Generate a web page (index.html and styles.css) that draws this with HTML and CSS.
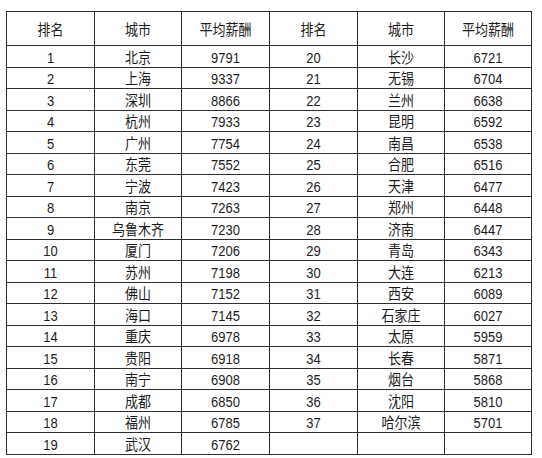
FILE: index.html
```html
<!DOCTYPE html>
<html lang="zh">
<head>
<meta charset="utf-8">
<link rel="stylesheet" href="styles.css">
</head>
<body>
<div class="table">
  <div class="cell head"><span>排名</span></div><div class="cell head"><span>城市</span></div><div class="cell head"><span>平均薪酬</span></div><div class="cell head"><span>排名</span></div><div class="cell head"><span>城市</span></div><div class="cell head"><span>平均薪酬</span></div>
  <div class="cell"><span>1</span></div><div class="cell"><span>北京</span></div><div class="cell"><span>9791</span></div><div class="cell"><span>20</span></div><div class="cell"><span>长沙</span></div><div class="cell"><span>6721</span></div>
  <div class="cell"><span>2</span></div><div class="cell"><span>上海</span></div><div class="cell"><span>9337</span></div><div class="cell"><span>21</span></div><div class="cell"><span>无锡</span></div><div class="cell"><span>6704</span></div>
  <div class="cell"><span>3</span></div><div class="cell"><span>深圳</span></div><div class="cell"><span>8866</span></div><div class="cell"><span>22</span></div><div class="cell"><span>兰州</span></div><div class="cell"><span>6638</span></div>
  <div class="cell"><span>4</span></div><div class="cell"><span>杭州</span></div><div class="cell"><span>7933</span></div><div class="cell"><span>23</span></div><div class="cell"><span>昆明</span></div><div class="cell"><span>6592</span></div>
  <div class="cell"><span>5</span></div><div class="cell"><span>广州</span></div><div class="cell"><span>7754</span></div><div class="cell"><span>24</span></div><div class="cell"><span>南昌</span></div><div class="cell"><span>6538</span></div>
  <div class="cell"><span>6</span></div><div class="cell"><span>东莞</span></div><div class="cell"><span>7552</span></div><div class="cell"><span>25</span></div><div class="cell"><span>合肥</span></div><div class="cell"><span>6516</span></div>
  <div class="cell"><span>7</span></div><div class="cell"><span>宁波</span></div><div class="cell"><span>7423</span></div><div class="cell"><span>26</span></div><div class="cell"><span>天津</span></div><div class="cell"><span>6477</span></div>
  <div class="cell"><span>8</span></div><div class="cell"><span>南京</span></div><div class="cell"><span>7263</span></div><div class="cell"><span>27</span></div><div class="cell"><span>郑州</span></div><div class="cell"><span>6448</span></div>
  <div class="cell"><span>9</span></div><div class="cell"><span>乌鲁木齐</span></div><div class="cell"><span>7230</span></div><div class="cell"><span>28</span></div><div class="cell"><span>济南</span></div><div class="cell"><span>6447</span></div>
  <div class="cell"><span>10</span></div><div class="cell"><span>厦门</span></div><div class="cell"><span>7206</span></div><div class="cell"><span>29</span></div><div class="cell"><span>青岛</span></div><div class="cell"><span>6343</span></div>
  <div class="cell"><span>11</span></div><div class="cell"><span>苏州</span></div><div class="cell"><span>7198</span></div><div class="cell"><span>30</span></div><div class="cell"><span>大连</span></div><div class="cell"><span>6213</span></div>
  <div class="cell"><span>12</span></div><div class="cell"><span>佛山</span></div><div class="cell"><span>7152</span></div><div class="cell"><span>31</span></div><div class="cell"><span>西安</span></div><div class="cell"><span>6089</span></div>
  <div class="cell"><span>13</span></div><div class="cell"><span>海口</span></div><div class="cell"><span>7145</span></div><div class="cell"><span>32</span></div><div class="cell"><span>石家庄</span></div><div class="cell"><span>6027</span></div>
  <div class="cell"><span>14</span></div><div class="cell"><span>重庆</span></div><div class="cell"><span>6978</span></div><div class="cell"><span>33</span></div><div class="cell"><span>太原</span></div><div class="cell"><span>5959</span></div>
  <div class="cell"><span>15</span></div><div class="cell"><span>贵阳</span></div><div class="cell"><span>6918</span></div><div class="cell"><span>34</span></div><div class="cell"><span>长春</span></div><div class="cell"><span>5871</span></div>
  <div class="cell"><span>16</span></div><div class="cell"><span>南宁</span></div><div class="cell"><span>6908</span></div><div class="cell"><span>35</span></div><div class="cell"><span>烟台</span></div><div class="cell"><span>5868</span></div>
  <div class="cell"><span>17</span></div><div class="cell"><span>成都</span></div><div class="cell"><span>6850</span></div><div class="cell"><span>36</span></div><div class="cell"><span>沈阳</span></div><div class="cell"><span>5810</span></div>
  <div class="cell"><span>18</span></div><div class="cell"><span>福州</span></div><div class="cell"><span>6785</span></div><div class="cell"><span>37</span></div><div class="cell"><span>哈尔滨</span></div><div class="cell"><span>5701</span></div>
  <div class="cell"><span>19</span></div><div class="cell"><span>武汉</span></div><div class="cell"><span>6762</span></div><div class="cell"></div><div class="cell"></div><div class="cell"></div>
</div>
</body>
</html>
```

FILE: styles.css
```css
html, body {
  margin: 0;
  padding: 0;
  background: #ffffff;
}

body {
  padding: 11px 0 0 6px;
  font-family: "Liberation Sans", "Noto Sans CJK SC", sans-serif;
  font-size: 13px;
  color: #1c1c1c;
}

.table {
  display: grid;
  grid-template-columns: 88px 87px 88px 88px 87px 87px;
  grid-template-rows: 34px repeat(19, 21.5px);
  width: 526px;
  box-sizing: border-box;
  border-left: 1px solid #2e2e2e;
  border-top: 1px solid #2e2e2e;
}

.cell {
  box-sizing: border-box;
  border-right: 1px solid #2e2e2e;
  border-bottom: 1px solid #2e2e2e;
  display: flex;
  align-items: center;
  justify-content: center;
  line-height: 1;
  padding-top: 2px;
}

.cell span {
  display: inline-block;
  transform: scaleY(1.15);
}

.head {
  padding-top: 2px;
}
```
